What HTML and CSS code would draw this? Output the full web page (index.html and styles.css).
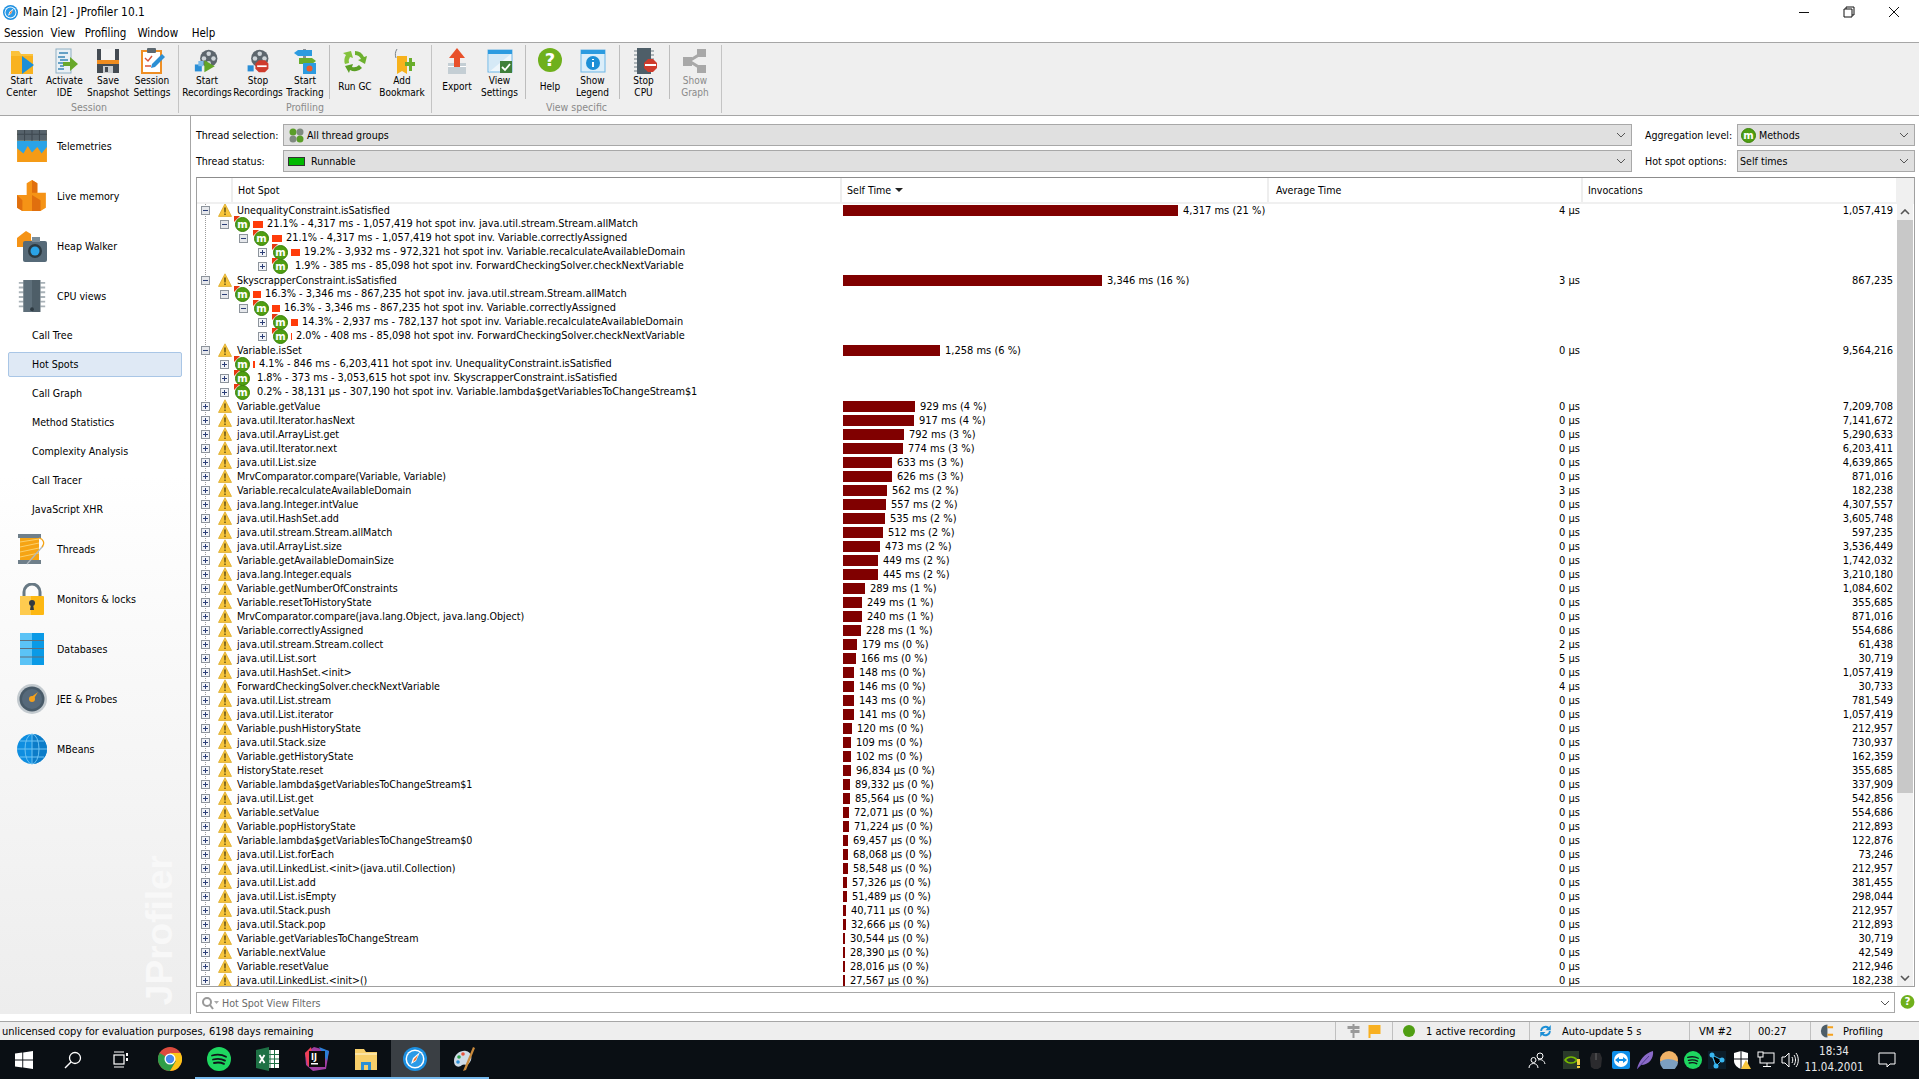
FILE: index.html
```html
<!DOCTYPE html>
<html lang="en">
<head>
    <meta charset="UTF-8">
    <title>Main [2] - JProfiler 10.1</title>
    <link rel="stylesheet" href="styles.css">
</head>
<body>
<svg class="sprites" xmlns="http://www.w3.org/2000/svg">
    <symbol id="plus" viewBox="0 0 9 9"><rect x=".5" y=".5" width="8" height="8" fill="#f2f4f8" stroke="#8d949c"/><path d="M2 4.5h5M4.5 2v5" stroke="#2c3f78"/></symbol>
    <symbol id="minus" viewBox="0 0 9 9"><rect x=".5" y=".5" width="8" height="8" fill="#e6e8ec" stroke="#8d949c"/><path d="M2 4.5h5" stroke="#2c3f78"/></symbol>
    <symbol id="warn" viewBox="0 0 14 14"><path d="M7 .8l6.5 12.6H.5z" fill="#f8c63c" stroke="#dca92a" stroke-width=".8"/><path d="M6.2 4.5h1.6l-.2 5h-1.2zM6.3 10.4h1.4v1.6H6.3z" fill="#5b4a14"/></symbol>
    <symbol id="mi" viewBox="0 0 15 15"><circle cx="7.5" cy="7.5" r="7" fill="#4f9e12" stroke="#3a8209"/><text x="7.5" y="10.5" class="mtext">m</text></symbol>
    <symbol id="mhot" viewBox="0 0 16 16"><path d="M0 0h6L0 6z" fill="#e63a12"/><circle cx="8.5" cy="8.5" r="7" fill="#4f9e12" stroke="#3a8209"/><text x="8.5" y="11.5" class="mtext">m</text></symbol>
    <symbol id="chev" viewBox="0 0 10 6"><path d="M1 1l4 4 4-4" fill="none" stroke="#555"/></symbol>

    <symbol id="t-folder" viewBox="0 0 26 26"><path d="M2 3h8l2 3h12v20H2z" fill="#fbc23b"/><path d="M2 8h22v18H2z" fill="#f8b21f"/><path d="M13 8l12 9-12 9z" fill="#1c8fd6"/></symbol>
    <symbol id="t-ide" viewBox="0 0 26 26"><rect x="4" y="1" width="15" height="24" fill="#e9f0f5" stroke="#8fb0c4"/><path d="M7 5h9M6 9h7M8 12h8M6 15h5M8 18h4M6 21h6" stroke="#3b86b5" stroke-width="1.6"/><path d="M11 14h7V9l8 7-8 7v-5h-7z" fill="#68a82a"/></symbol>
    <symbol id="t-save" viewBox="0 0 26 26"><path d="M2 1h22v24H2z" fill="#444b52"/><rect x="6" y="1" width="14" height="11" fill="#f4f4f4"/><rect x="2" y="12" width="22" height="4" fill="#ef8c1f"/><rect x="8" y="18" width="10" height="7" fill="#c8ccd0"/><rect x="10" y="19" width="3" height="5" fill="#444b52"/></symbol>
    <symbol id="t-session" viewBox="0 0 26 26"><rect x="3" y="3" width="19" height="22" fill="#fff" stroke="#ef8f24" stroke-width="2"/><rect x="8" y="0" width="9" height="5" rx="1" fill="#5c6870"/><path d="M6 10l3 3 4-5M6 18h6" stroke="#d9543a" stroke-width="1.4" fill="none"/><path d="M12 20l1-4L23 6l3 3-10 10z" fill="#2c8fd4"/></symbol>
    <symbol id="t-reel" viewBox="0 0 30 26"><circle cx="17" cy="10" r="10" fill="#5d666d"/><circle cx="17" cy="4.5" r="2.6" fill="#cfd5d9"/><circle cx="17" cy="15.5" r="2.6" fill="#cfd5d9"/><circle cx="11.5" cy="10" r="2.6" fill="#cfd5d9"/><circle cx="22.5" cy="10" r="2.6" fill="#cfd5d9"/><rect x="1" y="17" width="8" height="8" fill="#2a8ed6"/><rect x="5" y="13" width="6" height="6" fill="#7cbbe8"/><path d="M12 12l12 7-12 7z" fill="#62a626"/></symbol>
    <symbol id="t-reelstop" viewBox="0 0 30 26"><circle cx="17" cy="10" r="10" fill="#5d666d"/><circle cx="17" cy="4.5" r="2.6" fill="#cfd5d9"/><circle cx="11.5" cy="10" r="2.6" fill="#cfd5d9"/><circle cx="22.5" cy="10" r="2.6" fill="#cfd5d9"/><rect x="3" y="18" width="7" height="7" fill="#2a8ed6"/><path d="M16 12h7l4 4v6l-4 4h-7l-4-4v-6z" fill="#cf3b2c"/><rect x="14" y="18" width="11" height="2" fill="#fff"/></symbol>
    <symbol id="t-track" viewBox="0 0 26 26"><rect x="11" y="1" width="3" height="14" fill="#8a8f94"/><path d="M2 5l4-3h14v6H6z" fill="#2c9be0"/><path d="M24 13l-4-3H7v6h13z" fill="#69ad2c"/><rect x="11" y="15" width="13" height="11" fill="#2c9be0"/><circle cx="17.5" cy="20.5" r="3" fill="#ef5a2a"/></symbol>
    <symbol id="t-gc" viewBox="0 0 26 26"><path d="M13 3a10 10 0 0 1 9 6l3-1-2 8-7-4 3-1a7 7 0 0 0-6-4z" fill="#6cb02e"/><path d="M3 16a10 10 0 0 1 1-9l-3-2 8-2 2 7-3-1a7 7 0 0 0-1 6z" fill="#84c23c"/><path d="M20 20a10 10 0 0 1-12 2l-1 3-4-7 8-2-1 3a7 7 0 0 0 7-2z" fill="#5b9f24"/></symbol>
    <symbol id="t-book" viewBox="0 0 26 26"><path d="M8 1c-2 3-2 6-1 9" fill="none" stroke="#7a8288"/><path d="M8 8h10v18l-5-3-5 3z" fill="#f7b21c"/><path d="M16 14h4v-4h3v4h3v4h-3v5h-3v-5h-4z" fill="#69ad2c"/></symbol>
    <symbol id="t-export" viewBox="0 0 26 26"><rect x="4" y="15" width="18" height="11" fill="#c4ced4"/><rect x="4" y="18" width="18" height="1" fill="#fff"/><path d="M13 0l8 10h-5v9h-6v-9H5z" fill="#e8502a"/></symbol>
    <symbol id="t-view" viewBox="0 0 26 26"><rect x="1" y="2" width="24" height="22" fill="#eef6fb" stroke="#6db6e6"/><rect x="1" y="2" width="24" height="4" fill="#2c9be0"/><path d="M2 24V6l22 0z" fill="#d5e9f6"/><rect x="13" y="13" width="12" height="12" fill="#3f7f3a"/><path d="M15 19l3 3 5-6" fill="none" stroke="#fff" stroke-width="1.8"/></symbol>
    <symbol id="t-help" viewBox="0 0 26 26"><circle cx="13" cy="12" r="12" fill="#6fb01c"/><text x="13" y="18" class="qtext">?</text></symbol>
    <symbol id="t-legend" viewBox="0 0 26 26"><rect x="1" y="2" width="24" height="22" fill="#dbeefa" stroke="#6db6e6"/><rect x="1" y="2" width="24" height="4" fill="#2c9be0"/><circle cx="13" cy="15" r="7" fill="#1c8fd6"/><path d="M13 11v1M13 14v5" stroke="#fff" stroke-width="2"/></symbol>
    <symbol id="t-cpu" viewBox="0 0 26 26"><path d="M3 3h3M3 7h3M3 11h3M3 15h3M3 19h3M3 23h3M20 3h3M20 7h3M20 11h3" stroke="#99a2a8" stroke-width="1.5"/><rect x="6" y="0" width="14" height="26" fill="#4e5e68"/><path d="M17 11h5l4 4v5l-4 4h-5l-4-4v-5z" fill="#cf3b2c"/><rect x="14" y="16" width="11" height="2" fill="#fff"/></symbol>
    <symbol id="t-graph" viewBox="0 0 26 26"><path d="M7 13L20 5M7 13l13 8" stroke="#a8a8a8" stroke-width="3"/><rect x="1" y="9" width="9" height="9" fill="#a8a8a8"/><rect x="15" y="1" width="9" height="8" fill="#a8a8a8"/><rect x="15" y="17" width="9" height="8" fill="#a8a8a8"/></symbol>

    <symbol id="s-telem" viewBox="0 0 28 30"><path d="M0 0h28v30H0z" fill="#f59b16"/><path d="M0 0h28v10H0z" fill="#56626b"/><path d="M0 10h28v6l-5 6-4-6-5 5-4-6-4 7-6-5z" fill="#2aa3e6"/><path d="M0 4h28M7 0v10M14 0v10M21 0v10" stroke="#3e4850"/></symbol>
    <symbol id="s-mem" viewBox="0 0 28 30"><path d="M9 3l5-3 5 3v9h8v14l-5 3H5l-5-3V14h9z" fill="#f59316"/><path d="M14 0l5 3v9h-5zM0 14v12l5 3v-10zM14 14v15h8v-10z" fill="#e06f0e"/></symbol>
    <symbol id="s-heap" viewBox="0 0 30 32"><path d="M5 4l4-3 5 3v6l4 3v4H0V8z" fill="#f59316"/><rect x="6" y="11" width="24" height="21" rx="2" fill="#566a78"/><rect x="15" y="7" width="8" height="5" fill="#7b8d99"/><circle cx="18" cy="21" r="7" fill="#2b3940"/><circle cx="18" cy="21" r="4.5" fill="#2aa3e6"/></symbol>
    <symbol id="s-cpu" viewBox="0 0 28 34"><path d="M0 3h5M0 8h5M0 13h5M0 18h5M0 23h5M0 28h5M23 3h5M23 8h5M23 13h5M23 18h5M23 23h5M23 28h5" stroke="#a9b2b8" stroke-width="2"/><path d="M5 0h18v34H5z" fill="#4e5e68"/><path d="M5 0h9v34H5z" fill="#5e6f7a"/><circle cx="14" cy="31" r="2" fill="#2e3a42"/></symbol>
    <symbol id="s-threads" viewBox="0 0 30 30"><rect x="1" y="0" width="23" height="4" fill="#6f7f8a"/><rect x="1" y="26" width="23" height="4" fill="#6f7f8a"/><rect x="3" y="4" width="19" height="22" fill="#f6a414"/><path d="M3 8l19-3M3 13l19-4M3 18l19-4M3 23l19-4" stroke="#fcd06a"/><path d="M10 30L26 12" stroke="#b0b8bd" stroke-width="1.2"/><path d="M22 4c5 1 6 6 3 9" fill="none" stroke="#f6a414" stroke-width="1.2"/></symbol>
    <symbol id="s-lock" viewBox="0 0 26 32"><path d="M5 15V9a8 8 0 0 1 16 0v6" fill="none" stroke="#687984" stroke-width="3"/><rect x="1" y="13" width="24" height="19" rx="1" fill="#fdb813"/><path d="M1 13h11v19H1z" fill="#fecb4f"/><circle cx="13" cy="20" r="3" fill="#333b40"/><path d="M12 21h2l1 6h-4z" fill="#333b40"/></symbol>
    <symbol id="s-db" viewBox="0 0 24 32"><path d="M0 0h24v32H0z" fill="#0a9ae6"/><path d="M0 0h12v32H0z" fill="#5bc3f6"/><path d="M0 7.5h24M0 15.5h24M0 24h24" stroke="#5d6f7c" stroke-width="1.2"/></symbol>
    <symbol id="s-gauge" viewBox="0 0 30 30"><circle cx="15" cy="15" r="15" fill="#c3cacf"/><circle cx="15" cy="15" r="12.5" fill="#485a68"/><circle cx="15" cy="15" r="10" fill="#56697a"/><circle cx="15" cy="15" r="3" fill="#f5a11c"/><path d="M13 14l8-6-5 8z" fill="#f5a11c"/></symbol>
    <symbol id="s-globe" viewBox="0 0 30 30"><circle cx="15" cy="15" r="15" fill="#0f8ee0"/><path d="M15 0a15 15 0 0 1 0 30z" fill="#0c7cc8"/><g fill="none" stroke="#6cc2f3"><ellipse cx="15" cy="15" rx="7" ry="15"/><path d="M15 0v30M0 15h30M3 7h24M3 23h24"/></g></symbol>

    <symbol id="b-win" viewBox="0 0 18 18"><path d="M0 2.6l7.3-1v7H0zM8.2 1.4L18 0v8.6H8.2zM0 9.4h7.3v7L0 15.4zM8.2 9.4H18V18l-9.8-1.4z" fill="#fff"/></symbol>
    <symbol id="b-search" viewBox="0 0 18 18"><circle cx="11" cy="7" r="5.5" fill="none" stroke="#fff" stroke-width="1.3"/><path d="M7 11l-6 6" stroke="#fff" stroke-width="1.4"/></symbol>
    <symbol id="b-task" viewBox="0 0 18 18"><rect x="2" y="4" width="10" height="9" fill="none" stroke="#fff" stroke-width="1.2"/><path d="M2 1h10M2 16h10" stroke="#fff" stroke-width="1.2"/><rect x="14" y="2" width="2" height="3" fill="#fff"/><rect x="14" y="7" width="2" height="3" fill="#fff"/></symbol>
    <symbol id="b-chrome" viewBox="0 0 24 24"><circle cx="12" cy="12" r="12" fill="#dd4b3e"/><path d="M12 12L1.6 6A12 12 0 0 0 12 24l6-10z" fill="#2f9e49"/><path d="M12 12l6 2-6 10A12 12 0 0 0 22.4 6H12z" fill="#fbc518"/><circle cx="12" cy="12" r="5.5" fill="#fff"/><circle cx="12" cy="12" r="4.2" fill="#4688ee"/></symbol>
    <symbol id="b-spotify" viewBox="0 0 24 24"><circle cx="12" cy="12" r="12" fill="#1ed760"/><path d="M5 8.5c5-1.4 10-1 14 1.2M6 12.5c4-1 8.5-.8 12 1.1M7 16c3.5-.8 7-.6 10 .9" fill="none" stroke="#10151a" stroke-width="1.8" stroke-linecap="round"/></symbol>
    <symbol id="b-excel" viewBox="0 0 24 24"><rect x="9" y="3" width="14" height="18" fill="#fff"/><path d="M14 3v18M18.5 3v18M9 7.5h14M9 12h14M9 16.5h14" stroke="#1e7145"/><path d="M0 3l13-3v24L0 21z" fill="#1e7145"/><path d="M3.5 8l5 8M8.5 8l-5 8" stroke="#fff" stroke-width="1.8"/></symbol>
    <symbol id="b-ij" viewBox="0 0 24 24"><path d="M0 6l9-6 15 4-3 18-13 2-7-6z" fill="#a13fa3"/><path d="M14 0l10 4-2 10z" fill="#2a7fd8"/><path d="M0 6l6-6 2 12-5 8z" fill="#ee4056"/><rect x="4" y="4" width="16" height="16" fill="#0c0c0c"/><text x="6" y="13" class="ijtext">IJ</text><rect x="6" y="16" width="7" height="1.5" fill="#fff"/></symbol>
    <symbol id="b-folder" viewBox="0 0 24 24"><path d="M1 2h9l2 3h11v18H1z" fill="#f8cf6a"/><rect x="1" y="6" width="22" height="2" fill="#fbe3a3"/><rect x="7" y="15" width="10" height="8" fill="#2c8fd6"/><rect x="10" y="18" width="4" height="5" fill="#f8cf6a"/></symbol>
    <symbol id="b-jp" viewBox="0 0 24 24"><circle cx="12" cy="12" r="12" fill="#1c8fe0"/><circle cx="12" cy="12" r="9.5" fill="#fff"/><circle cx="12" cy="12" r="8" fill="#2b9ae6"/><path d="M8 17l2-6 7-6-4 9z" fill="#fff"/><path d="M10 15l1-3 4-4-2 5z" fill="#f0772e"/></symbol>
    <symbol id="b-paint" viewBox="0 0 24 24"><path d="M2 14C2 7 9 3 14 4c5 1 7 7 4 11-3 5-5 1-8 3-3 3-8 2-8-4z" fill="#cfdbe6"/><circle cx="7" cy="10" r="1.8" fill="#2f9e49"/><circle cx="11" cy="7" r="1.8" fill="#e8503a"/><circle cx="6" cy="15" r="1.8" fill="#2c8fd6"/><path d="M21 0l2 1-9 22-3 1z" fill="#c98a3c"/></symbol>

    <symbol id="y-people" viewBox="0 0 18 18"><circle cx="12" cy="5" r="3" fill="none" stroke="#fff"/><circle cx="5.5" cy="9" r="2.5" fill="none" stroke="#fff"/><path d="M1 17c0-6 9-6 9 0M10 9c3-1 6 0 7 4" fill="none" stroke="#fff"/></symbol>
    <symbol id="y-nvidia" viewBox="0 0 18 18"><rect width="16" height="18" fill="#2a3a2a"/><path d="M2 9c3-4 9-4 12 0-3 4-9 4-12 0z" fill="none" stroke="#76b900" stroke-width="1.6"/><rect x="14" y="8" width="3" height="6" fill="#f5d142"/><rect x="14" y="15" width="3" height="2" fill="#f5d142"/></symbol>
    <symbol id="y-mouse" viewBox="0 0 18 18"><path d="M5 2h8l2 5-1 9-3 2H7l-3-2-1-9z" fill="#2b2b2e"/><path d="M9 2v7" stroke="#666"/></symbol>
    <symbol id="y-tv" viewBox="0 0 18 18"><rect width="18" height="18" rx="2" fill="#0e8ee9"/><circle cx="9" cy="9" r="7" fill="#fff"/><path d="M3 9l4-3v2h4V6l4 3-4 3v-2H7v2z" fill="#0e8ee9"/></symbol>
    <symbol id="y-feather" viewBox="0 0 18 18"><path d="M1 18C3 9 9 2 17 0c1 7-4 14-12 14z" fill="#8a6ac8"/><path d="M1 18L13 5" stroke="#4f3a8a"/></symbol>
    <symbol id="y-sun" viewBox="0 0 18 18"><circle cx="9" cy="9" r="9" fill="#f0b267"/><path d="M0 11c4-4 12-4 18 0a9 9 0 0 1-18 0z" fill="#7c9fc0"/></symbol>
    <symbol id="y-net" viewBox="0 0 18 18"><rect width="18" height="18" fill="#0b1d2a"/><path d="M4 4l10 5-6 6zM4 4l4 11" stroke="#38b6f0"/><circle cx="4" cy="4" r="2.5" fill="#38b6f0"/><circle cx="14" cy="9" r="2.5" fill="#38b6f0"/><circle cx="8" cy="15" r="2.5" fill="#38b6f0"/></symbol>
    <symbol id="y-shield" viewBox="0 0 18 18"><path d="M1 2l7-2 7 2v8c0 4-4 7-7 8-3-1-7-4-7-8z" fill="#fff"/><path d="M8 0v18M1 8h14" stroke="#0a0f14"/><path d="M13 9l5 9H8z" fill="#f8c63c"/></symbol>
    <symbol id="y-monitor" viewBox="0 0 18 18"><rect x="3" y="2" width="14" height="10" fill="none" stroke="#fff"/><rect x="1" y="1" width="5" height="5" fill="#0a0f14" stroke="#fff"/><path d="M10 12v3M6 15.5h8" stroke="#fff"/></symbol>
    <symbol id="y-vol" viewBox="0 0 18 18"><path d="M1 6h3l4-4v14l-4-4H1z" fill="none" stroke="#fff"/><path d="M11 6c1 2 1 4 0 6M13 4c2 3 2 7 0 10M15 2c3 4 3 10 0 14" fill="none" stroke="#fff"/></symbol>
    <symbol id="y-note" viewBox="0 0 18 18"><path d="M1 2h16v11h-5l-3 3v-3H1z" fill="none" stroke="#fff"/></symbol>
</svg>

<div class="titlebar">
    <svg class="title-icon"><use href="#b-jp"/></svg>
    <span class="title-text">Main [2] - JProfiler 10.1</span>
    <div class="window-buttons">
        <svg class="win-btn" viewBox="0 0 12 12"><path d="M1 6.5h10" stroke="#111"/></svg>
        <svg class="win-btn" viewBox="0 0 12 12"><path d="M3 3V1h8v8H9M1 3h8v8H1z" fill="none" stroke="#111"/></svg>
        <svg class="win-btn" viewBox="0 0 12 12"><path d="M1 1l10 10M11 1L1 11" stroke="#111"/></svg>
    </div>
</div>
<div class="menubar"><span>Session</span><span>View</span><span>Profiling</span><span>Window</span><span>Help</span></div>

<div class="toolbar">
    <div class="group g-session">
        <div class="group-tools">
            <div class="tool w43"><svg><use href="#t-folder"/></svg><span>Start<br>Center</span></div>
            <div class="tool w43"><svg><use href="#t-ide"/></svg><span>Activate<br>IDE</span></div>
            <div class="tool w44"><svg><use href="#t-save"/></svg><span>Save<br>Snapshot</span></div>
            <div class="tool w44"><svg><use href="#t-session"/></svg><span>Session<br>Settings</span></div>
        </div>
        <div class="group-label">Session</div>
    </div>
    <div class="group g-profiling">
        <div class="group-tools">
            <div class="tool w56"><svg><use href="#t-reel"/></svg><span>Start<br>Recordings</span></div>
            <div class="tool w46"><svg><use href="#t-reelstop"/></svg><span>Stop<br>Recordings</span></div>
            <div class="tool w49 sep sep-gap"><svg><use href="#t-track"/></svg><span>Start<br>Tracking</span></div>
            <div class="tool w46"><svg><use href="#t-gc"/></svg><span>Run GC</span></div>
            <div class="tool w48"><svg><use href="#t-book"/></svg><span>Add<br>Bookmark</span></div>
        </div>
        <div class="group-label">Profiling</div>
    </div>
    <div class="group g-view">
        <div class="group-tools">
            <div class="tool w48"><svg><use href="#t-export"/></svg><span>Export</span></div>
            <div class="tool w45 sep pad7"><svg><use href="#t-view"/></svg><span>View<br>Settings</span></div>
            <div class="tool w48"><svg><use href="#t-help"/></svg><span>Help</span></div>
            <div class="tool w46 sep pad8"><svg><use href="#t-legend"/></svg><span>Show<br>Legend</span></div>
            <div class="tool w50 sep pad2"><svg><use href="#t-cpu"/></svg><span>Stop<br>CPU</span></div>
            <div class="tool w50 disabled"><svg><use href="#t-graph"/></svg><span>Show<br>Graph</span></div>
        </div>
        <div class="group-label">View specific</div>
    </div>
</div>

<div class="main">
    <nav class="sidebar">
        <div class="nav-item"><svg><use href="#s-telem"/></svg><span>Telemetries</span></div>
        <div class="nav-item"><svg><use href="#s-mem"/></svg><span>Live memory</span></div>
        <div class="nav-item"><svg><use href="#s-heap"/></svg><span>Heap Walker</span></div>
        <div class="nav-item"><svg><use href="#s-cpu"/></svg><span>CPU views</span></div>
        <div class="nav-sub">Call Tree</div>
        <div class="nav-sub selected">Hot Spots</div>
        <div class="nav-sub">Call Graph</div>
        <div class="nav-sub">Method Statistics</div>
        <div class="nav-sub">Complexity Analysis</div>
        <div class="nav-sub">Call Tracer</div>
        <div class="nav-sub">JavaScript XHR</div>
        <div class="nav-item"><svg><use href="#s-threads"/></svg><span>Threads</span></div>
        <div class="nav-item"><svg><use href="#s-lock"/></svg><span>Monitors &amp; locks</span></div>
        <div class="nav-item"><svg><use href="#s-db"/></svg><span>Databases</span></div>
        <div class="nav-item"><svg><use href="#s-gauge"/></svg><span>JEE &amp; Probes</span></div>
        <div class="nav-item"><svg><use href="#s-globe"/></svg><span>MBeans</span></div>
        <div class="watermark">JProfiler</div>
    </nav>

    <section class="content">
        <div class="option-row">
            <label class="opt-label">Thread selection:</label>
            <div class="combo combo-wide">
                <svg class="combo-icon" viewBox="0 0 15 15"><circle cx="4" cy="4" r="3.5" fill="#5a9e28"/><circle cx="11" cy="4" r="3.5" fill="#7f8a80"/><circle cx="4" cy="11" r="3.5" fill="#7f8a80"/><circle cx="11" cy="11" r="3.5" fill="#5a9e28"/></svg>
                <span>All thread groups</span>
                <svg class="chev"><use href="#chev"/></svg>
            </div>
            <label class="opt-label opt-right">Aggregation level:</label>
            <div class="combo combo-small">
                <svg class="combo-icon"><use href="#mi"/></svg>
                <span>Methods</span>
                <svg class="chev"><use href="#chev"/></svg>
            </div>
        </div>
        <div class="option-row">
            <label class="opt-label">Thread status:</label>
            <div class="combo combo-wide">
                <i class="status-swatch"></i>
                <span>Runnable</span>
                <svg class="chev"><use href="#chev"/></svg>
            </div>
            <label class="opt-label opt-right">Hot spot options:</label>
            <div class="combo combo-small">
                <span>Self times</span>
                <svg class="chev"><use href="#chev"/></svg>
            </div>
        </div>

        <div class="table">
            <div class="table-head">
                <div class="th th-blank"></div>
                <div class="th th-spot">Hot Spot</div>
                <div class="th th-self">Self Time <i class="sort-arrow"></i></div>
                <div class="th th-avg">Average Time</div>
                <div class="th th-inv">Invocations</div>
                <div class="th th-end"></div>
            </div>
            <div class="table-body">
                <div class="rows">
                    <div class="row"><div class="tree d0"><svg class="exp"><use href="#minus"/></svg><svg class="warn"><use href="#warn"/></svg><span>UnequalityConstraint.isSatisfied</span></div><div class="self"><i class="bar" style="width:335px"></i>4,317 ms (21 %)</div><div class="avg">4 µs</div><div class="inv">1,057,419</div></div>
                    <div class="row"><div class="tree d1"><svg class="exp"><use href="#minus"/></svg><svg class="mnode"><use href="#mhot"/></svg><i class="minibar" style="width:10px"></i><span>21.1% - 4,317 ms - 1,057,419 hot spot inv. java.util.stream.Stream.allMatch</span></div></div>
                    <div class="row"><div class="tree d2"><svg class="exp"><use href="#minus"/></svg><svg class="mnode"><use href="#mhot"/></svg><i class="minibar" style="width:10px"></i><span>21.1% - 4,317 ms - 1,057,419 hot spot inv. Variable.correctlyAssigned</span></div></div>
                    <div class="row"><div class="tree d3"><svg class="exp"><use href="#plus"/></svg><svg class="mnode"><use href="#mhot"/></svg><i class="minibar" style="width:9px"></i><span>19.2% - 3,932 ms - 972,321 hot spot inv. Variable.recalculateAvailableDomain</span></div></div>
                    <div class="row"><div class="tree d3"><svg class="exp"><use href="#plus"/></svg><svg class="mnode"><use href="#mhot"/></svg><i class="minibar" style="width:0"></i><span>1.9% - 385 ms - 85,098 hot spot inv. ForwardCheckingSolver.checkNextVariable</span></div></div>
                    <div class="row"><div class="tree d0"><svg class="exp"><use href="#minus"/></svg><svg class="warn"><use href="#warn"/></svg><span>SkyscrapperConstraint.isSatisfied</span></div><div class="self"><i class="bar" style="width:259px"></i>3,346 ms (16 %)</div><div class="avg">3 µs</div><div class="inv">867,235</div></div>
                    <div class="row"><div class="tree d1"><svg class="exp"><use href="#minus"/></svg><svg class="mnode"><use href="#mhot"/></svg><i class="minibar" style="width:8px"></i><span>16.3% - 3,346 ms - 867,235 hot spot inv. java.util.stream.Stream.allMatch</span></div></div>
                    <div class="row"><div class="tree d2"><svg class="exp"><use href="#minus"/></svg><svg class="mnode"><use href="#mhot"/></svg><i class="minibar" style="width:8px"></i><span>16.3% - 3,346 ms - 867,235 hot spot inv. Variable.correctlyAssigned</span></div></div>
                    <div class="row"><div class="tree d3"><svg class="exp"><use href="#plus"/></svg><svg class="mnode"><use href="#mhot"/></svg><i class="minibar" style="width:7px"></i><span>14.3% - 2,937 ms - 782,137 hot spot inv. Variable.recalculateAvailableDomain</span></div></div>
                    <div class="row"><div class="tree d3"><svg class="exp"><use href="#plus"/></svg><svg class="mnode"><use href="#mhot"/></svg><i class="minibar" style="width:1px"></i><span>2.0% - 408 ms - 85,098 hot spot inv. ForwardCheckingSolver.checkNextVariable</span></div></div>
                    <div class="row"><div class="tree d0"><svg class="exp"><use href="#minus"/></svg><svg class="warn"><use href="#warn"/></svg><span>Variable.isSet</span></div><div class="self"><i class="bar" style="width:97px"></i>1,258 ms (6 %)</div><div class="avg">0 µs</div><div class="inv">9,564,216</div></div>
                    <div class="row"><div class="tree d1"><svg class="exp"><use href="#plus"/></svg><svg class="mnode"><use href="#mhot"/></svg><i class="minibar" style="width:2px"></i><span>4.1% - 846 ms - 6,203,411 hot spot inv. UnequalityConstraint.isSatisfied</span></div></div>
                    <div class="row"><div class="tree d1"><svg class="exp"><use href="#plus"/></svg><svg class="mnode"><use href="#mhot"/></svg><i class="minibar" style="width:0"></i><span>1.8% - 373 ms - 3,053,615 hot spot inv. SkyscrapperConstraint.isSatisfied</span></div></div>
                    <div class="row"><div class="tree d1"><svg class="exp"><use href="#plus"/></svg><svg class="mnode"><use href="#mhot"/></svg><i class="minibar" style="width:0"></i><span>0.2% - 38,131 µs - 307,190 hot spot inv. Variable.lambda$getVariablesToChangeStream$1</span></div></div>
                    <div class="row"><div class="tree d0"><svg class="exp"><use href="#plus"/></svg><svg class="warn"><use href="#warn"/></svg><span>Variable.getValue</span></div><div class="self"><i class="bar" style="width:72px"></i>929 ms (4 %)</div><div class="avg">0 µs</div><div class="inv">7,209,708</div></div>
                    <div class="row"><div class="tree d0"><svg class="exp"><use href="#plus"/></svg><svg class="warn"><use href="#warn"/></svg><span>java.util.Iterator.hasNext</span></div><div class="self"><i class="bar" style="width:71px"></i>917 ms (4 %)</div><div class="avg">0 µs</div><div class="inv">7,141,672</div></div>
                    <div class="row"><div class="tree d0"><svg class="exp"><use href="#plus"/></svg><svg class="warn"><use href="#warn"/></svg><span>java.util.ArrayList.get</span></div><div class="self"><i class="bar" style="width:61px"></i>792 ms (3 %)</div><div class="avg">0 µs</div><div class="inv">5,290,633</div></div>
                    <div class="row"><div class="tree d0"><svg class="exp"><use href="#plus"/></svg><svg class="warn"><use href="#warn"/></svg><span>java.util.Iterator.next</span></div><div class="self"><i class="bar" style="width:60px"></i>774 ms (3 %)</div><div class="avg">0 µs</div><div class="inv">6,203,411</div></div>
                    <div class="row"><div class="tree d0"><svg class="exp"><use href="#plus"/></svg><svg class="warn"><use href="#warn"/></svg><span>java.util.List.size</span></div><div class="self"><i class="bar" style="width:49px"></i>633 ms (3 %)</div><div class="avg">0 µs</div><div class="inv">4,639,865</div></div>
                    <div class="row"><div class="tree d0"><svg class="exp"><use href="#plus"/></svg><svg class="warn"><use href="#warn"/></svg><span>MrvComparator.compare(Variable, Variable)</span></div><div class="self"><i class="bar" style="width:49px"></i>626 ms (3 %)</div><div class="avg">0 µs</div><div class="inv">871,016</div></div>
                    <div class="row"><div class="tree d0"><svg class="exp"><use href="#plus"/></svg><svg class="warn"><use href="#warn"/></svg><span>Variable.recalculateAvailableDomain</span></div><div class="self"><i class="bar" style="width:44px"></i>562 ms (2 %)</div><div class="avg">3 µs</div><div class="inv">182,238</div></div>
                    <div class="row"><div class="tree d0"><svg class="exp"><use href="#plus"/></svg><svg class="warn"><use href="#warn"/></svg><span>java.lang.Integer.intValue</span></div><div class="self"><i class="bar" style="width:43px"></i>557 ms (2 %)</div><div class="avg">0 µs</div><div class="inv">4,307,557</div></div>
                    <div class="row"><div class="tree d0"><svg class="exp"><use href="#plus"/></svg><svg class="warn"><use href="#warn"/></svg><span>java.util.HashSet.add</span></div><div class="self"><i class="bar" style="width:42px"></i>535 ms (2 %)</div><div class="avg">0 µs</div><div class="inv">3,605,748</div></div>
                    <div class="row"><div class="tree d0"><svg class="exp"><use href="#plus"/></svg><svg class="warn"><use href="#warn"/></svg><span>java.util.stream.Stream.allMatch</span></div><div class="self"><i class="bar" style="width:40px"></i>512 ms (2 %)</div><div class="avg">0 µs</div><div class="inv">597,235</div></div>
                    <div class="row"><div class="tree d0"><svg class="exp"><use href="#plus"/></svg><svg class="warn"><use href="#warn"/></svg><span>java.util.ArrayList.size</span></div><div class="self"><i class="bar" style="width:37px"></i>473 ms (2 %)</div><div class="avg">0 µs</div><div class="inv">3,536,449</div></div>
                    <div class="row"><div class="tree d0"><svg class="exp"><use href="#plus"/></svg><svg class="warn"><use href="#warn"/></svg><span>Variable.getAvailableDomainSize</span></div><div class="self"><i class="bar" style="width:35px"></i>449 ms (2 %)</div><div class="avg">0 µs</div><div class="inv">1,742,032</div></div>
                    <div class="row"><div class="tree d0"><svg class="exp"><use href="#plus"/></svg><svg class="warn"><use href="#warn"/></svg><span>java.lang.Integer.equals</span></div><div class="self"><i class="bar" style="width:35px"></i>445 ms (2 %)</div><div class="avg">0 µs</div><div class="inv">3,210,180</div></div>
                    <div class="row"><div class="tree d0"><svg class="exp"><use href="#plus"/></svg><svg class="warn"><use href="#warn"/></svg><span>Variable.getNumberOfConstraints</span></div><div class="self"><i class="bar" style="width:22px"></i>289 ms (1 %)</div><div class="avg">0 µs</div><div class="inv">1,084,602</div></div>
                    <div class="row"><div class="tree d0"><svg class="exp"><use href="#plus"/></svg><svg class="warn"><use href="#warn"/></svg><span>Variable.resetToHistoryState</span></div><div class="self"><i class="bar" style="width:19px"></i>249 ms (1 %)</div><div class="avg">0 µs</div><div class="inv">355,685</div></div>
                    <div class="row"><div class="tree d0"><svg class="exp"><use href="#plus"/></svg><svg class="warn"><use href="#warn"/></svg><span>MrvComparator.compare(java.lang.Object, java.lang.Object)</span></div><div class="self"><i class="bar" style="width:19px"></i>240 ms (1 %)</div><div class="avg">0 µs</div><div class="inv">871,016</div></div>
                    <div class="row"><div class="tree d0"><svg class="exp"><use href="#plus"/></svg><svg class="warn"><use href="#warn"/></svg><span>Variable.correctlyAssigned</span></div><div class="self"><i class="bar" style="width:18px"></i>228 ms (1 %)</div><div class="avg">0 µs</div><div class="inv">554,686</div></div>
                    <div class="row"><div class="tree d0"><svg class="exp"><use href="#plus"/></svg><svg class="warn"><use href="#warn"/></svg><span>java.util.stream.Stream.collect</span></div><div class="self"><i class="bar" style="width:14px"></i>179 ms (0 %)</div><div class="avg">2 µs</div><div class="inv">61,438</div></div>
                    <div class="row"><div class="tree d0"><svg class="exp"><use href="#plus"/></svg><svg class="warn"><use href="#warn"/></svg><span>java.util.List.sort</span></div><div class="self"><i class="bar" style="width:13px"></i>166 ms (0 %)</div><div class="avg">5 µs</div><div class="inv">30,719</div></div>
                    <div class="row"><div class="tree d0"><svg class="exp"><use href="#plus"/></svg><svg class="warn"><use href="#warn"/></svg><span>java.util.HashSet.&lt;init&gt;</span></div><div class="self"><i class="bar" style="width:11px"></i>148 ms (0 %)</div><div class="avg">0 µs</div><div class="inv">1,057,419</div></div>
                    <div class="row"><div class="tree d0"><svg class="exp"><use href="#plus"/></svg><svg class="warn"><use href="#warn"/></svg><span>ForwardCheckingSolver.checkNextVariable</span></div><div class="self"><i class="bar" style="width:11px"></i>146 ms (0 %)</div><div class="avg">4 µs</div><div class="inv">30,733</div></div>
                    <div class="row"><div class="tree d0"><svg class="exp"><use href="#plus"/></svg><svg class="warn"><use href="#warn"/></svg><span>java.util.List.stream</span></div><div class="self"><i class="bar" style="width:11px"></i>143 ms (0 %)</div><div class="avg">0 µs</div><div class="inv">781,549</div></div>
                    <div class="row"><div class="tree d0"><svg class="exp"><use href="#plus"/></svg><svg class="warn"><use href="#warn"/></svg><span>java.util.List.iterator</span></div><div class="self"><i class="bar" style="width:11px"></i>141 ms (0 %)</div><div class="avg">0 µs</div><div class="inv">1,057,419</div></div>
                    <div class="row"><div class="tree d0"><svg class="exp"><use href="#plus"/></svg><svg class="warn"><use href="#warn"/></svg><span>Variable.pushHistoryState</span></div><div class="self"><i class="bar" style="width:9px"></i>120 ms (0 %)</div><div class="avg">0 µs</div><div class="inv">212,957</div></div>
                    <div class="row"><div class="tree d0"><svg class="exp"><use href="#plus"/></svg><svg class="warn"><use href="#warn"/></svg><span>java.util.Stack.size</span></div><div class="self"><i class="bar" style="width:8px"></i>109 ms (0 %)</div><div class="avg">0 µs</div><div class="inv">730,937</div></div>
                    <div class="row"><div class="tree d0"><svg class="exp"><use href="#plus"/></svg><svg class="warn"><use href="#warn"/></svg><span>Variable.getHistoryState</span></div><div class="self"><i class="bar" style="width:8px"></i>102 ms (0 %)</div><div class="avg">0 µs</div><div class="inv">162,359</div></div>
                    <div class="row"><div class="tree d0"><svg class="exp"><use href="#plus"/></svg><svg class="warn"><use href="#warn"/></svg><span>HistoryState.reset</span></div><div class="self"><i class="bar" style="width:8px"></i>96,834 µs (0 %)</div><div class="avg">0 µs</div><div class="inv">355,685</div></div>
                    <div class="row"><div class="tree d0"><svg class="exp"><use href="#plus"/></svg><svg class="warn"><use href="#warn"/></svg><span>Variable.lambda$getVariablesToChangeStream$1</span></div><div class="self"><i class="bar" style="width:7px"></i>89,332 µs (0 %)</div><div class="avg">0 µs</div><div class="inv">337,909</div></div>
                    <div class="row"><div class="tree d0"><svg class="exp"><use href="#plus"/></svg><svg class="warn"><use href="#warn"/></svg><span>java.util.List.get</span></div><div class="self"><i class="bar" style="width:7px"></i>85,564 µs (0 %)</div><div class="avg">0 µs</div><div class="inv">542,856</div></div>
                    <div class="row"><div class="tree d0"><svg class="exp"><use href="#plus"/></svg><svg class="warn"><use href="#warn"/></svg><span>Variable.setValue</span></div><div class="self"><i class="bar" style="width:6px"></i>72,071 µs (0 %)</div><div class="avg">0 µs</div><div class="inv">554,686</div></div>
                    <div class="row"><div class="tree d0"><svg class="exp"><use href="#plus"/></svg><svg class="warn"><use href="#warn"/></svg><span>Variable.popHistoryState</span></div><div class="self"><i class="bar" style="width:6px"></i>71,224 µs (0 %)</div><div class="avg">0 µs</div><div class="inv">212,893</div></div>
                    <div class="row"><div class="tree d0"><svg class="exp"><use href="#plus"/></svg><svg class="warn"><use href="#warn"/></svg><span>Variable.lambda$getVariablesToChangeStream$0</span></div><div class="self"><i class="bar" style="width:5px"></i>69,457 µs (0 %)</div><div class="avg">0 µs</div><div class="inv">122,876</div></div>
                    <div class="row"><div class="tree d0"><svg class="exp"><use href="#plus"/></svg><svg class="warn"><use href="#warn"/></svg><span>java.util.List.forEach</span></div><div class="self"><i class="bar" style="width:5px"></i>68,068 µs (0 %)</div><div class="avg">0 µs</div><div class="inv">73,246</div></div>
                    <div class="row"><div class="tree d0"><svg class="exp"><use href="#plus"/></svg><svg class="warn"><use href="#warn"/></svg><span>java.util.LinkedList.&lt;init&gt;(java.util.Collection)</span></div><div class="self"><i class="bar" style="width:5px"></i>58,548 µs (0 %)</div><div class="avg">0 µs</div><div class="inv">212,957</div></div>
                    <div class="row"><div class="tree d0"><svg class="exp"><use href="#plus"/></svg><svg class="warn"><use href="#warn"/></svg><span>java.util.List.add</span></div><div class="self"><i class="bar" style="width:4px"></i>57,326 µs (0 %)</div><div class="avg">0 µs</div><div class="inv">381,455</div></div>
                    <div class="row"><div class="tree d0"><svg class="exp"><use href="#plus"/></svg><svg class="warn"><use href="#warn"/></svg><span>java.util.List.isEmpty</span></div><div class="self"><i class="bar" style="width:4px"></i>51,489 µs (0 %)</div><div class="avg">0 µs</div><div class="inv">298,044</div></div>
                    <div class="row"><div class="tree d0"><svg class="exp"><use href="#plus"/></svg><svg class="warn"><use href="#warn"/></svg><span>java.util.Stack.push</span></div><div class="self"><i class="bar" style="width:3px"></i>40,711 µs (0 %)</div><div class="avg">0 µs</div><div class="inv">212,957</div></div>
                    <div class="row"><div class="tree d0"><svg class="exp"><use href="#plus"/></svg><svg class="warn"><use href="#warn"/></svg><span>java.util.Stack.pop</span></div><div class="self"><i class="bar" style="width:3px"></i>32,666 µs (0 %)</div><div class="avg">0 µs</div><div class="inv">212,893</div></div>
                    <div class="row"><div class="tree d0"><svg class="exp"><use href="#plus"/></svg><svg class="warn"><use href="#warn"/></svg><span>Variable.getVariablesToChangeStream</span></div><div class="self"><i class="bar" style="width:2px"></i>30,544 µs (0 %)</div><div class="avg">0 µs</div><div class="inv">30,719</div></div>
                    <div class="row"><div class="tree d0"><svg class="exp"><use href="#plus"/></svg><svg class="warn"><use href="#warn"/></svg><span>Variable.nextValue</span></div><div class="self"><i class="bar" style="width:2px"></i>28,390 µs (0 %)</div><div class="avg">0 µs</div><div class="inv">42,549</div></div>
                    <div class="row"><div class="tree d0"><svg class="exp"><use href="#plus"/></svg><svg class="warn"><use href="#warn"/></svg><span>Variable.resetValue</span></div><div class="self"><i class="bar" style="width:2px"></i>28,016 µs (0 %)</div><div class="avg">0 µs</div><div class="inv">212,946</div></div>
                    <div class="row"><div class="tree d0"><svg class="exp"><use href="#plus"/></svg><svg class="warn"><use href="#warn"/></svg><span>java.util.LinkedList.&lt;init&gt;()</span></div><div class="self"><i class="bar" style="width:2px"></i>27,567 µs (0 %)</div><div class="avg">0 µs</div><div class="inv">182,238</div></div>
                </div>
                <div class="scrollbar">
                    <div class="scroll-btn"><svg viewBox="0 0 10 6"><path d="M1 5l4-4 4 4" fill="none" stroke="#555" stroke-width="1.6"/></svg></div>
                    <div class="scroll-thumb"></div>
                    <div class="scroll-track"></div>
                    <div class="scroll-btn"><svg viewBox="0 0 10 6"><path d="M1 1l4 4 4-4" fill="none" stroke="#555" stroke-width="1.6"/></svg></div>
                </div>
            </div>
        </div>

        <div class="filter-row">
            <div class="filter">
                <svg class="filter-icon" viewBox="0 0 18 14"><circle cx="6" cy="6" r="4" fill="none" stroke="#999" stroke-width="2"/><path d="M9 9l3 4" stroke="#999" stroke-width="2"/><path d="M13 5h5l-2.5 3z" fill="#aaa"/></svg>
                <span>Hot Spot View Filters</span>
                <svg class="chev"><use href="#chev"/></svg>
            </div>
            <svg class="filter-help"><use href="#t-help"/></svg>
        </div>
    </section>
</div>

<div class="statusbar">
    <div class="status-msg">unlicensed copy for evaluation purposes, 6198 days remaining</div>
    <div class="cell c-icons">
        <svg viewBox="0 0 14 14"><path d="M6 0h2v14H6zM1 2h12v3H1zM4 6h9v3H4z" fill="#999"/></svg>
        <svg viewBox="0 0 14 14"><path d="M1 1h12v9H1zM1 10h2v4H1z" fill="#f8b021"/></svg>
    </div>
    <div class="cell c-rec"><i class="rec-dot"></i>1 active recording</div>
    <div class="cell c-auto"><svg viewBox="0 0 16 16"><path d="M2 8a6 6 0 0 1 10-4.5L14 1v6H8l2-2a4 4 0 0 0-6 3z" fill="#1c8fd6"/><path d="M14 8a6 6 0 0 1-10 4.5L2 15V9h6l-2 2a4 4 0 0 0 6-3z" fill="#1c8fd6"/></svg>Auto-update 5 s</div>
    <div class="cell c-vm">VM #2</div>
    <div class="cell c-time">00:27</div>
    <div class="cell c-prof"><svg viewBox="0 0 16 14"><path d="M9 0v14A7 7 0 0 1 9 0z" fill="#4e5e68"/><path d="M9 3h6M9 11h6" stroke="#f5a11c" stroke-width="2"/></svg>Profiling</div>
</div>

<footer class="taskbar">
    <div class="task-sys"><svg><use href="#b-win"/></svg></div>
    <div class="task-sys"><svg><use href="#b-search"/></svg></div>
    <div class="task-sys"><svg><use href="#b-task"/></svg></div>
    <div class="task-app"><svg><use href="#b-chrome"/></svg></div>
    <div class="task-app open"><svg><use href="#b-spotify"/></svg></div>
    <div class="task-app open"><svg><use href="#b-excel"/></svg></div>
    <div class="task-app open"><svg><use href="#b-ij"/></svg></div>
    <div class="task-app open"><svg><use href="#b-folder"/></svg></div>
    <div class="task-app open active"><svg><use href="#b-jp"/></svg></div>
    <div class="task-app open"><svg><use href="#b-paint"/></svg></div>
    <div class="tray">
        <div class="tray-people"><svg><use href="#y-people"/></svg></div>
        <div class="tray-slot"><svg><use href="#y-nvidia"/></svg></div>
        <div class="tray-slot"><svg><use href="#y-mouse"/></svg></div>
        <div class="tray-slot"><svg><use href="#y-tv"/></svg></div>
        <div class="tray-slot"><svg><use href="#y-feather"/></svg></div>
        <div class="tray-slot"><svg><use href="#y-sun"/></svg></div>
        <div class="tray-slot"><svg><use href="#b-spotify"/></svg></div>
        <div class="tray-slot"><svg><use href="#y-net"/></svg></div>
        <div class="tray-slot"><svg><use href="#y-shield"/></svg></div>
        <div class="tray-slot"><svg><use href="#y-monitor"/></svg></div>
        <div class="tray-slot"><svg><use href="#y-vol"/></svg></div>
        <div class="clock"><span>18:34</span><span>11.04.2001</span></div>
        <div class="tray-note"><svg><use href="#y-note"/></svg></div>
    </div>
</footer>
</body>
</html>
```

FILE: styles.css
```css
* {
    box-sizing: border-box;
}
html, body {
    margin: 0;
    height: 1079px;
    overflow: hidden;
}
body {
    display: flex;
    flex-direction: column;
    font-family: "DejaVu Sans Condensed", "DejaVu Sans", sans-serif;
    font-stretch: condensed;
    font-size: 10.6px;
    color: #000;
    background: #fff;
}
.sprites {
    display: none;
}
.mtext {
    font: bold 10px "DejaVu Sans", sans-serif;
    fill: #fff;
    text-anchor: middle;
}
.qtext {
    font: bold 18px "DejaVu Sans", sans-serif;
    fill: #fff;
    text-anchor: middle;
}
.ijtext {
    font: bold 8px "DejaVu Sans", sans-serif;
    fill: #fff;
}

/* title + menu */
.titlebar {
    height: 28px;
    display: flex;
    align-items: center;
    padding: 0 0 4px 3px;
    font-size: 11.8px;
}
.title-icon {
    width: 15px;
    height: 15px;
    margin-right: 5px;
}
.window-buttons {
    margin-left: auto;
    display: flex;
    gap: 33px;
    padding-right: 19px;
}
.win-btn {
    width: 12px;
    height: 12px;
}
.menubar {
    height: 14px;
    display: flex;
    align-items: center;
    padding: 0 0 4px 4px;
    gap: 9.5px;
    font-size: 11.5px;
}
.menubar span:nth-child(2) {
    margin-left: -2.4px;
}
.menubar span:nth-child(4) {
    margin-left: 1.5px;
}
.menubar span:nth-child(5) {
    margin-left: 4px;
}

/* toolbar */
.toolbar {
    height: 74px;
    display: flex;
    background: #efefef;
    border-top: 1px solid #a6a6a6;
    border-bottom: 1px solid #a6a6a6;
}
.group {
    border-right: 1px solid #c4c4c4;
    margin: 2px 0;
    display: flex;
    flex-direction: column;
}
.g-session {
    width: 179px;
}
.g-profiling {
    width: 253px;
}
.g-view {
    width: 290px;
}
.group-tools {
    display: flex;
    height: 58px;
}
.g-view .group-tools {
    padding-left: 1px;
}
.group-label {
    text-align: center;
    color: #8a8a8a;
    font-size: 10.5px;
    line-height: 12px;
    margin-top: 2px;
}
.tool {
    display: flex;
    flex-direction: column;
    align-items: center;
    flex: none;
    font-size: 10px;
    line-height: 11.5px;
    text-align: center;
    white-space: nowrap;
}
.tool svg {
    width: 26px;
    height: 26px;
    margin-top: 3px;
    flex: none;
}
.tool span {
    height: 25px;
    display: flex;
    align-items: center;
}
.tool.sep {
    border-right: 1px solid #bdbdbd;
}
.tool.sep-gap {
    margin-right: 2px;
}
.tool.pad2 { padding-right: 2px; }
.tool.pad7 { padding-right: 7px; }
.tool.pad8 { padding-right: 8px; }
.tool.disabled {
    color: #8a8a8a;
}
.w43 { width: 43px; }
.w44 { width: 44px; }
.w45 { width: 45px; }
.w46 { width: 46px; }
.w48 { width: 48px; }
.w49 { width: 49px; }
.w50 { width: 50px; }
.w56 { width: 56px; }

/* main */
.main {
    flex: 1;
    min-height: 0;
    display: flex;
}
.sidebar {
    width: 191px;
    flex: none;
    position: relative;
    padding-top: 5px;
    border-right: 1px solid #a6a6a6;
    background: linear-gradient(#fff 40%, #ededed);
    overflow: hidden;
}
.nav-item {
    height: 50px;
    display: flex;
    align-items: center;
    padding-left: 17px;
}
.nav-item svg {
    width: 30px;
    height: 32px;
    margin-right: 10px;
}
.nav-sub {
    height: 29px;
    display: flex;
    align-items: center;
    padding: 0 0 2px 32px;
}
.nav-sub.selected {
    height: 25px;
    margin: 2px 8px;
    padding: 0 0 2px 23px;
    background: #dfe9f5;
    border: 1px solid #a9c6e6;
    border-radius: 2px;
}
.watermark {
    position: absolute;
    right: 9px;
    bottom: 9px;
    writing-mode: vertical-rl;
    transform: rotate(180deg);
    font: bold 37px "Liberation Sans", sans-serif;
    color: #f8f8f8;
}
.content {
    flex: 1;
    min-width: 0;
    display: flex;
    flex-direction: column;
    padding: 8px 4px 0 5px;
}
.option-row {
    display: flex;
    align-items: center;
    height: 22px;
    margin-bottom: 4px;
}
.opt-label {
    width: 87px;
    flex: none;
}
.opt-right {
    width: 105px;
    padding-left: 13px;
}
.combo {
    height: 22px;
    display: flex;
    align-items: center;
    background: #e0e0e0;
    border: 1px solid #a8a8a8;
    padding: 0 5px 0 4px;
}
.combo-wide {
    flex: 1;
}
.combo-small {
    width: 178px;
    flex: none;
    padding-left: 2px;
}
.combo-icon {
    width: 15px;
    height: 15px;
    margin: 0 3px 0 1px;
}
.combo .chev {
    width: 10px;
    height: 6px;
    margin-left: auto;
}
.status-swatch {
    width: 17px;
    height: 9px;
    margin: 0 6px 0 0;
    background: #00b800;
    border: 1px solid #333;
}

/* table */
.table {
    height: 810px;
    margin-top: 1px;
    display: flex;
    flex-direction: column;
    border: 1px solid #a0a0a0;
    border-top-color: #8c8c8c;
}
.table-head {
    height: 26px;
    flex: none;
    display: flex;
    border-bottom: 2px solid #f0f0f0;
}
.th {
    display: flex;
    align-items: center;
    border-right: 2px solid #eee;
    padding-left: 5px;
    flex: none;
}
.th-blank { width: 36px; padding: 0; }
.th-spot { width: 609px; }
.th-self { width: 427px; }
.th-avg { width: 314px; padding-left: 7px; }
.th-inv { width: 313px; border-right: 0; }
.th-end {
    flex: 1;
    border: 0;
    background: #f0f0f0;
}
.sort-arrow {
    margin-left: 4px;
    border: 4px solid transparent;
    border-top: 4px solid #222;
    border-bottom: 0;
}
.table-body {
    flex: 1;
    min-height: 0;
    display: flex;
}
.rows {
    flex: 1;
    min-width: 0;
    overflow: hidden;
    background: repeating-linear-gradient(#9a9a9a 0 1px, transparent 1px 2px) 8px 0 / 1px 100% no-repeat;
}
.row {
    height: 14px;
    display: flex;
    line-height: 14px;
    white-space: nowrap;
}
.tree {
    width: 645px;
    flex: none;
    height: 14px;
    padding-bottom: 2px;
    display: flex;
    align-items: center;
}
.d0 { padding-left: 4px; }
.d1 { padding-left: 23px; font-size: 10.85px; }
.d2 { padding-left: 42px; font-size: 10.85px; }
.d3 { padding-left: 61px; font-size: 10.85px; }
.exp {
    width: 9px;
    height: 9px;
    flex: none;
}
.warn {
    width: 14px;
    height: 14px;
    margin: 0 5px 0 8px;
    flex: none;
}
.mnode {
    width: 16px;
    height: 16px;
    margin: 0 3px 0 5px;
    flex: none;
    overflow: visible;
}
.minibar {
    height: 7px;
    margin-right: 4px;
    background: #ff3c0a;
    flex: none;
}
.self {
    width: 427px;
    flex: none;
    display: flex;
    align-items: center;
    padding-left: 1px;
    font-size: 11px;
}
.bar {
    height: 11px;
    margin: 0 5px 1px 0;
    background: #800000;
    flex: none;
}
.avg {
    width: 314px;
    flex: none;
    text-align: right;
    padding-right: 3px;
    font-size: 11px;
}
.inv {
    width: 315px;
    flex: none;
    text-align: right;
    padding-right: 5px;
    font-size: 11px;
}
.scrollbar {
    width: 16px;
    flex: none;
    margin-right: 1px;
    display: flex;
    flex-direction: column;
    background: #f0f0f0;
}
.scroll-btn {
    height: 16px;
    flex: none;
    display: flex;
    align-items: center;
    justify-content: center;
}
.scroll-btn svg {
    width: 10px;
    height: 6px;
}
.scroll-thumb {
    height: 573px;
    flex: none;
    background: #c8c8c8;
}
.scroll-track {
    flex: 1;
}

/* filter */
.filter-row {
    display: flex;
    align-items: center;
    margin-top: 5px;
}
.filter {
    flex: 1;
    height: 21px;
    display: flex;
    align-items: center;
    padding: 0 4px 0 4px;
    border: 1px solid #a8a8a8;
    color: #6a6a6a;
}
.filter .chev {
    width: 10px;
    height: 6px;
    margin-left: auto;
}
.filter-icon {
    width: 18px;
    height: 14px;
    margin-right: 3px;
}
.filter-help {
    width: 15px;
    height: 15px;
    margin-left: 5px;
}

/* status */
.statusbar {
    height: 19px;
    flex: none;
    margin-top: 7px;
    display: flex;
    align-items: center;
    background: #eee;
    border-top: 1px solid #a6a6a6;
    font-size: 11px;
    white-space: nowrap;
}
.status-msg {
    flex: 1;
    padding-left: 2px;
}
.cell {
    height: 18px;
    flex: none;
    display: flex;
    align-items: center;
    border-left: 1px solid #c0c0c0;
}
.cell svg {
    width: 15px;
    height: 14px;
    margin-right: 9px;
}
.c-icons { width: 57px; padding-left: 10px; }
.c-icons svg { margin-right: 6px; }
.c-rec { width: 137px; padding-left: 10px; }
.c-auto { width: 160px; padding-left: 8px; }
.c-vm { width: 60px; padding-left: 9px; }
.c-time { width: 61px; padding-left: 8px; }
.c-prof { width: 109px; padding-left: 8px; }
.rec-dot {
    width: 12px;
    height: 12px;
    margin-right: 11px;
    border-radius: 50%;
    background: #4f9e12;
}

/* taskbar */
.taskbar {
    height: 39px;
    flex: none;
    display: flex;
    background: #0a0f14;
    color: #e8e8e8;
}
.task-sys {
    width: 48.5px;
    flex: none;
    display: flex;
    align-items: center;
    justify-content: center;
}
.task-sys svg {
    width: 18px;
    height: 18px;
}
.task-app {
    width: 49px;
    flex: none;
    display: flex;
    align-items: center;
    justify-content: center;
    border-bottom: 2px solid transparent;
}
.task-app svg {
    width: 24px;
    height: 24px;
}
.task-app.open {
    border-bottom-color: #76b9ed;
}
.task-app.active {
    background: #3a3f44;
}
.tray {
    margin-left: auto;
    display: flex;
    align-items: center;
    padding-right: 9px;
}
.tray-people {
    width: 47px;
    display: flex;
    justify-content: center;
}
.tray-people svg, .tray-slot svg {
    width: 18px;
    height: 18px;
    display: block;
}
.tray-slot {
    width: 24.2px;
    display: flex;
    justify-content: center;
}
.clock {
    width: 60px;
    margin-left: 2px;
    display: flex;
    flex-direction: column;
    align-items: center;
    gap: 3px;
    font-size: 11.5px;
    line-height: 13px;
}
.tray-note {
    width: 46px;
    display: flex;
    justify-content: center;
}
.tray-note svg {
    width: 18px;
    height: 18px;
}
```
